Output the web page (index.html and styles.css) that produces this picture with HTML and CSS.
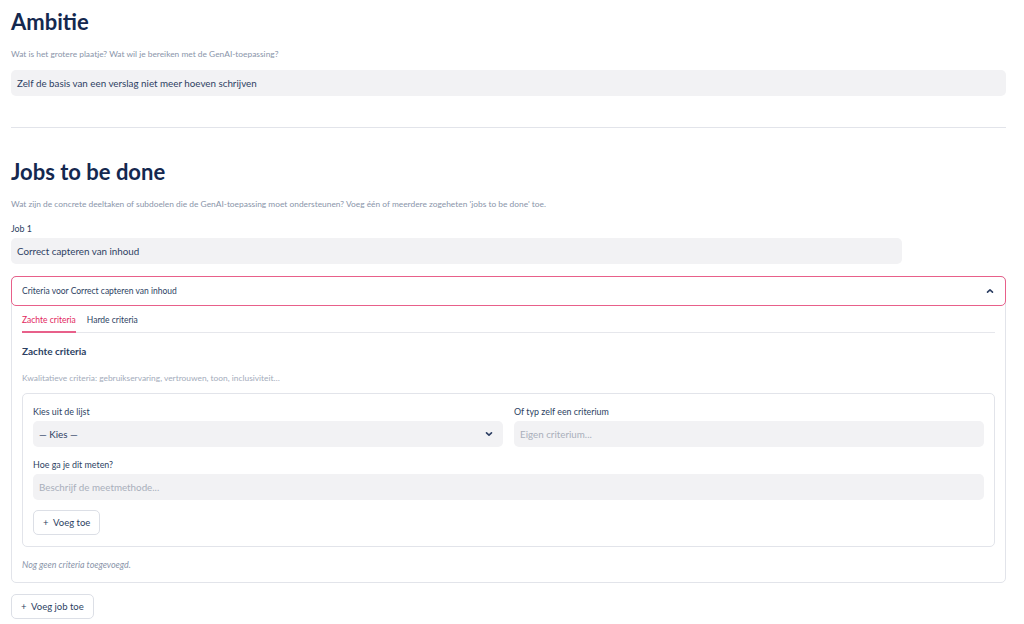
FILE: index.html
```html
<!DOCTYPE html>
<html lang="nl">

<head>
    <meta charset="UTF-8">
    <meta name="viewport" content="width=device-width, initial-scale=1.0">
    <title>GenAI canvas</title>
    <link rel="stylesheet" href="styles.css">
</head>

<body>

    <!-- Ambitie -->
    <section class="block">
        <h1>Ambitie</h1>
        <p class="caption">Wat is het grotere plaatje? Wat wil je bereiken met de GenAI-toepassing?</p>
        <div class="field">Zelf de basis van een verslag niet meer hoeven schrijven</div>
    </section>

    <hr class="divider">

    <!-- Jobs to be done -->
    <section class="block">
        <h1 class="jobs-title">Jobs to be done</h1>
        <p class="caption caption-jobs">Wat zijn de concrete deeltaken of subdoelen die de GenAI-toepassing moet ondersteunen? Voeg één of meerdere zogeheten 'jobs to be done' toe.</p>
        <label class="label">Job 1</label>
        <div class="field field-job">Correct capteren van inhoud</div>

        <div class="expander">
            <div class="expander-head">
                <span>Criteria voor Correct capteren van inhoud</span>
                <svg width="10" height="10" viewBox="0 0 10 10">
                    <path d="M2.5 6.2 L5 3.8 L7.5 6.2" fill="none" stroke="#2d3f63" stroke-width="1.6" stroke-linecap="round" stroke-linejoin="round"/>
                </svg>
            </div>
            <div class="expander-body">
                <div class="tabs">
                    <span class="tab active">Zachte criteria</span>
                    <span class="tab">Harde criteria</span>
                </div>

                <h3>Zachte criteria</h3>
                <p class="caption hint">Kwalitatieve criteria: gebruikservaring, vertrouwen, toon, inclusiviteit…</p>

                <div class="form-box">
                    <div class="row">
                        <div class="col">
                            <label class="label">Kies uit de lijst</label>
                            <div class="field select">
                                <span>— Kies —</span>
                                <svg width="10" height="10" viewBox="0 0 10 10">
                                    <path d="M2.5 3.8 L5 6.2 L7.5 3.8" fill="none" stroke="#2d3f63" stroke-width="1.6" stroke-linecap="round" stroke-linejoin="round"/>
                                </svg>
                            </div>
                        </div>
                        <div class="col">
                            <label class="label">Of typ zelf een criterium</label>
                            <div class="field placeholder">Eigen criterium...</div>
                        </div>
                    </div>
                    <label class="label">Hoe ga je dit meten?</label>
                    <div class="field placeholder">Beschrijf de meetmethode...</div>
                    <button class="btn">+&nbsp; Voeg toe</button>
                </div>

                <p class="empty">Nog geen criteria toegevoegd.</p>
            </div>
        </div>

        <button class="btn btn-job">+&nbsp; Voeg job toe</button>
    </section>

</body>

</html>
```

FILE: styles.css
```css
body {
    font-family: Lato, "Noto Sans", sans-serif;
    background-color: #ffffff;
    color: #2d3f63;
    margin: 0;
    padding: 8px 18px 0 11px;
}

h1 {
    color: #14284f;
    font-size: 22px;
    font-weight: 700;
    margin: 0;
    line-height: 28px;
}

.jobs-title {
    margin-top: 30px;
}

.caption {
    color: #8a95aa;
    font-size: 8.4px;
    margin: 13px 0 11px;
}

.caption-jobs {
    margin-bottom: 14px;
}

.label {
    display: block;
    font-size: 8.9px;
    color: #2d3f63;
    margin-bottom: 4px;
}

.field {
    background-color: #f2f2f4;
    border-radius: 5px;
    height: 26px;
    line-height: 26px;
    padding: 0 6px;
    font-size: 9.8px;
    color: #2d3f63;
    box-sizing: border-box;
}

.field-job {
    width: 891px;
}

.placeholder {
    color: #a9afbb;
}

.divider {
    border: none;
    border-top: 1px solid #e2e4ea;
    margin: 31px 0 0;
}

/* Expander */
.expander {
    margin-top: 12px;
    border: 1px solid #e2e4ea;
    border-radius: 5px;
}

.expander-head {
    display: flex;
    justify-content: space-between;
    align-items: center;
    height: 28px;
    padding: 0 10px;
    border: 1px solid #e8608a;
    border-radius: 5px;
    margin: -1px;
    font-size: 8.5px;
    color: #2d3f63;
}

.expander-body {
    padding: 0 10px 12px 10px;
}

.tabs {
    display: flex;
    gap: 11px;
    border-bottom: 1px solid #e6e7ec;
    margin-top: 6px;
}

.tab {
    font-size: 8.5px;
    padding: 4px 0 6px;
    color: #2d3f63;
}

.tab.active {
    color: #e2285e;
    border-bottom: 2px solid #e8608a;
    margin-bottom: -1px;
}

h3 {
    font-size: 10px;
    font-weight: 700;
    color: #2d3f63;
    margin: 12px 0 0;
}

.hint {
    color: #a4acbb;
    margin: 16px 0 10px;
}

.form-box {
    border: 1px solid #e2e4ea;
    border-radius: 5px;
    padding: 12px 10px 11px;
}

.row {
    display: flex;
    gap: 11px;
    margin-bottom: 12px;
}

.col {
    flex: 1;
}

.select {
    display: flex;
    justify-content: space-between;
    align-items: center;
    padding-right: 9px;
}

.btn {
    display: block;
    font-family: inherit;
    font-size: 9.5px;
    color: #2d3f63;
    background-color: #ffffff;
    border: 1px solid #dcdfe6;
    border-radius: 5px;
    height: 25px;
    padding: 0 9px;
    margin-top: 10px;
    cursor: pointer;
}

.empty {
    font-size: 8.9px;
    font-style: italic;
    color: #8a95aa;
    margin: 12px 0 0;
}

.btn-job {
    margin-top: 11px;
}
```
